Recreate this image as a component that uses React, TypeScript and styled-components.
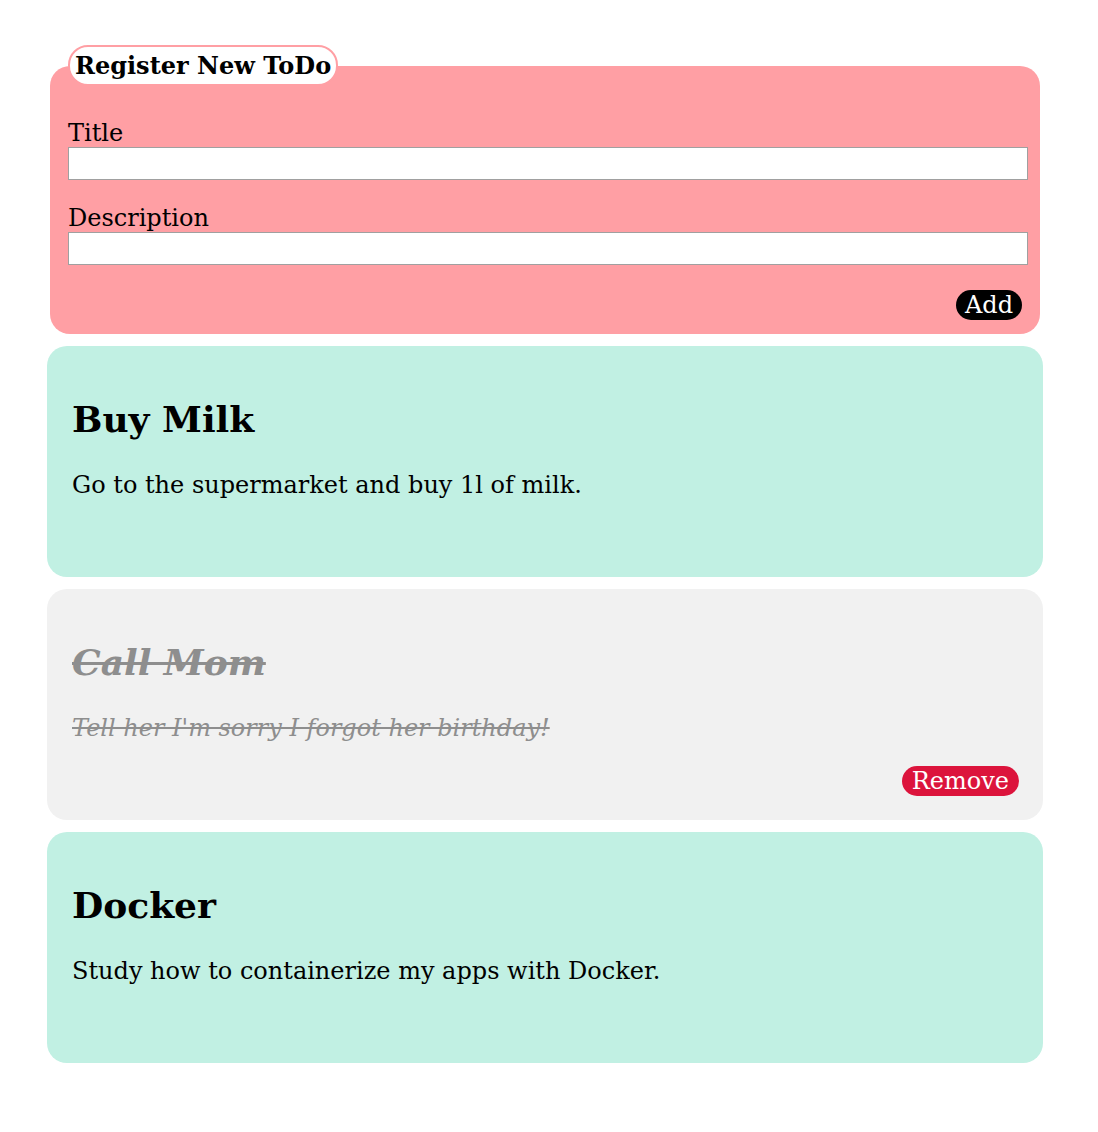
import React from "react";
import styled, { createGlobalStyle } from "styled-components";

const Global = createGlobalStyle`
  html, body { margin: 0; padding: 0; background: #ffffff; }
  body { font-family: "DejaVu Serif", serif; font-size: 24px; color: #000; }
`;

const Page = styled.div`
  width: 996px;
  padding: 45px 0 40px 47px;
  display: flex;
  flex-direction: column;
  gap: 12px;
`;

const Form = styled.fieldset`
  margin: 0 3px;
  padding: 9px 12px 14px 18px;
  border: none;
  border-radius: 20px;
  background: #ff9fa4;
  display: flex;
  flex-direction: column;
`;

const Legend = styled.legend`
  background: #ffffff;
  border: 2px solid #ff9fa4;
  border-radius: 20px;
  padding: 0 5px;
  font-weight: bold;
  font-size: 24px;
  line-height: 37px;
`;

const Field = styled.label`
  display: flex;
  flex-direction: column;
  margin-top: 24px;
  line-height: 28px;
`;

const Input = styled.input`
  box-sizing: border-box;
  width: 100%;
  height: 33px;
  margin: 0;
  border: 1px solid #a0a0a0;
  background: #fff;
  font: inherit;
`;

const Actions = styled.div`
  display: flex;
  justify-content: flex-end;
  margin-top: 25px;
  padding-right: 6px;
`;

const Pill = styled.button<{ $tone: string; $hidden?: boolean }>`
  background: ${(p) => p.$tone};
  color: #fff;
  border: none;
  border-radius: 15px;
  font-family: "DejaVu Serif", serif;
  font-size: 24px;
  font-style: normal;
  line-height: 30px;
  padding: 0 9px;
  visibility: ${(p) => (p.$hidden ? "hidden" : "visible")};
`;

const RemovePill = styled(Pill)`
  padding: 0 10px;
`;

const Card = styled.div<{ $done: boolean }>`
  box-sizing: border-box;
  height: 231px;
  border-radius: 20px;
  padding: 52px 24px 24px 25px;
  background: ${(p) => (p.$done ? "#f1f1f1" : "#c1f0e3")};
  color: ${(p) => (p.$done ? "#8e8e8e" : "#000")};
  display: flex;
  flex-direction: column;
`;

const Title = styled.h2<{ $done: boolean }>`
  margin: 0;
  font-size: 36px;
  line-height: 42px;
  font-weight: bold;
  font-style: ${(p) => (p.$done ? "italic" : "normal")};
  text-decoration: ${(p) => (p.$done ? "line-through" : "none")};
`;

const Desc = styled.p<{ $done: boolean }>`
  margin: 31px 0 0;
  line-height: 28px;
  font-style: ${(p) => (p.$done ? "italic" : "normal")};
  text-decoration: ${(p) => (p.$done ? "line-through" : "none")};
`;

const CardActions = styled.div`
  display: flex;
  justify-content: flex-end;
  margin-top: auto;
`;

const todos = [
  { title: "Buy Milk", desc: "Go to the supermarket and buy 1l of milk.", done: false },
  { title: "Call Mom", desc: "Tell her I'm sorry I forgot her birthday!", done: true },
  { title: "Docker", desc: "Study how to containerize my apps with Docker.", done: false },
];

export default function App() {
  return (
    <>
      <Global />
      <Page>
        <Form>
          <Legend>Register New ToDo</Legend>
          <Field>
            Title
            <Input type="text" />
          </Field>
          <Field>
            Description
            <Input type="text" />
          </Field>
          <Actions>
            <Pill $tone="#000000">Add</Pill>
          </Actions>
        </Form>
        {todos.map((t) => (
          <Card key={t.title} $done={t.done}>
            <Title $done={t.done}>{t.title}</Title>
            <Desc $done={t.done}>{t.desc}</Desc>
            <CardActions>
              <RemovePill $tone="#dc143c" $hidden={!t.done}>Remove</RemovePill>
            </CardActions>
          </Card>
        ))}
      </Page>
    </>
  );
}
